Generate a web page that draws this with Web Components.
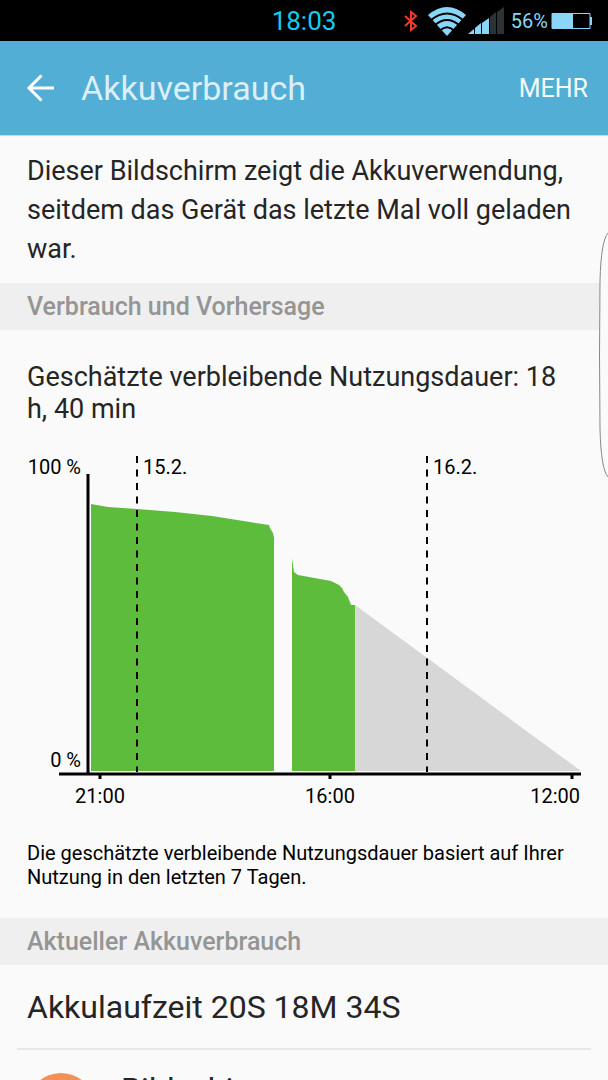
<!doctype html>
<html lang="de">
  <head>
    <meta charset="utf-8">
    <meta name="viewport" content="width=device-width, initial-scale=1">
    <title>Akkuverbrauch</title>
    <style>
      body {
        margin: 0;
        background: #fafafa;
        color: #252525;
        font-family: Roboto, "Liberation Sans", sans-serif;
      }
    </style>
    <script>const html = String.raw;</script>
  </head>
  <body>
    <battery-screen>
      <status-bar slot="top" time="18:03" level="56"></status-bar>
      <action-bar slot="top" action="Mehr">Akkuverbrauch</action-bar>

      <text-block>Dieser Bildschirm zeigt die Akkuverwendung, seitdem das Gerät das letzte Mal voll geladen war.</text-block>
      <section-header>Verbrauch und Vorhersage</section-header>
      <battery-forecast>
        <span slot="estimate">Geschätzte verbleibende Nutzungsdauer: 18 h, 40 min</span>
        <battery-chart></battery-chart>
        <span slot="note">Die geschätzte verbleibende Nutzungsdauer basiert auf Ihrer Nutzung in den letzten 7 Tagen.</span>
      </battery-forecast>
      <section-header>Aktueller Akkuverbrauch</section-header>
      <battery-runtime>Akkulaufzeit 20S 18M 34S</battery-runtime>
      <usage-item>Bildschirm</usage-item>

      <edge-handle slot="overlay"></edge-handle>
    </battery-screen>
    <script>
class BaseElement extends HTMLElement {
  constructor() {
    super();

    this.attachShadow({ mode: 'open' });
    this.shadowRoot.innerHTML = this.render();
  }
}

class BatteryScreen extends BaseElement {
  render() {
    return html`
      <style>
        :host {
          display: flex;
          flex-direction: column;
          position: relative;
          height: 100vh;
          overflow: hidden;
        }
        main {
          flex: 1;
          min-height: 0;
          overflow: hidden;
        }
      </style>

      <slot name="top"></slot>
      <main><slot></slot></main>
      <slot name="overlay"></slot>
    `;
  }
}

class StatusBar extends BaseElement {
  render() {
    return html`
      <style>
        :host {
          display: grid;
          grid-template-columns: 1fr auto 1fr;
          align-items: center;
          height: 41px;
          background: #000;
          color: #8ad6f8;
          font-size: 20px;
        }
        time {
          grid-column: 2;
          color: #12cdf0;
          font-size: 26px;
        }
        .icons {
          display: flex;
          align-items: center;
          justify-content: flex-end;
          padding-right: 15px;
        }
        svg {
          display: block;
          flex: none;
        }
        .wifi {
          margin: 0 2px 0 9px;
        }
        .signal {
          margin-right: 7px;
        }
        .battery {
          margin-left: 3px;
        }
      </style>

      <time>${this.getAttribute('time')}</time>
      <div class="icons">
        <svg width="16" height="22" viewBox="0 0 16 22" fill="none" stroke="#f23c28" stroke-width="2">
          <path d="M2 6l11 10-5 4V2l5 4L2 16"/>
        </svg>
        <svg class="wifi" width="38" height="30" viewBox="0 0 38 30">
          <!-- fan cut into bands by thin black arcs -->
          <path d="M0 9Q19-7 38 9L19 30z" fill="#8ad6f8"/>
          <path d="M3 14Q19 1 35 14M7 19Q19 9 31 19M12 24.500Q19 18 26 24.500" fill="none" stroke="#000" stroke-width="2"/>
        </svg>
        <svg class="signal" width="36" height="28" viewBox="0 0 36 28" fill="#8ad6f8">
          <path d="M0 27l6-5v5zM7 21l6-5v11H7zM14 16l7-5v16h-7z"/>
          <path d="M22 10l6-5v22h-6zM29 5l7-5v27h-7z" fill="#2b3336"/>
        </svg>
        <span>${this.getAttribute('level')}%</span>
        <svg class="battery" width="42" height="18" viewBox="0 0 42 18">
          <path d="M1 1.500h38v15H1z" fill="none" stroke="#8ad6f8"/>
          <path d="M1 1h21v16H1zM39 5h2v8h-2z" fill="#8ad6f8"/>
        </svg>
      </div>
    `;
  }
}

class ActionBar extends BaseElement {
  render() {
    return html`
      <style>
        :host {
          display: flex;
          align-items: center;
          height: 94px;
          padding: 0 20px 0 26px;
          background: #52aed5;
          box-shadow: 0 1px 1px #ccd5d9;
          z-index: 1;
        }
        button {
          border: none;
          padding: 0;
          background: transparent;
          color: #f5fafc;
          font: inherit;
          font-size: 25px;
          text-transform: uppercase;
          cursor: pointer;
        }
        svg {
          display: block;
        }
        h1 {
          flex: 1;
          margin: 0 0 0 27px;
          color: #dceef6;
          font-size: 34px;
          font-weight: 400;
        }
      </style>

      <button aria-label="Zurück">
        <svg width="28" height="28" viewBox="0 0 28 28" fill="none" stroke="#fff" stroke-width="3">
          <path d="M28 14H3M15.500 1.500L3 14l12.500 12.500"/>
        </svg>
      </button>
      <h1><slot></slot></h1>
      <button>${this.getAttribute('action')}</button>
    `;
  }
}

class TextBlock extends BaseElement {
  render() {
    return html`
      <style>
        :host {
          display: block;
          padding: 17px 27px 14px;
          font-size: 27px;
          line-height: 39px;
        }
      </style>

      <slot></slot>
    `;
  }
}

class SectionHeader extends BaseElement {
  render() {
    return html`
      <style>
        :host {
          display: block;
          padding: 0 27px;
          background: #efefef;
          color: #959595;
        }
        h2 {
          margin: 0;
          font-size: 25px;
          font-weight: 500;
          line-height: 47px;
        }
      </style>

      <h2><slot></slot></h2>
    `;
  }
}

class BatteryForecast extends BaseElement {
  render() {
    return html`
      <style>
        :host {
          display: block;
          padding: 31px 0 29px;
        }
        p {
          margin: 0 27px;
        }
        .estimate {
          font-size: 27px;
          line-height: 32px;
        }
        .note {
          color: #000;
          font-size: 20px;
          line-height: 24px;
        }
      </style>

      <p class="estimate"><slot name="estimate"></slot></p>
      <slot></slot>
      <p class="note"><slot name="note"></slot></p>
    `;
  }
}

class BatteryChart extends BaseElement {
  render() {
    return html`
      <style>
        :host {
          display: block;
          padding: 30px 0 26px;
        }
        svg {
          display: block;
          width: 100%;
        }
        text {
          font-size: 20px;
        }
        .end {
          text-anchor: end;
        }
        .middle {
          text-anchor: middle;
        }
      </style>

      <svg viewBox="0 0 608 360" role="img" aria-label="Akkustand">
        <!-- measured level -->
        <g fill="#5dbc3c">
          <path d="M91 49L108 52 137 54 175 57 212 61 269 70 270 73 273 78 274 83V316H91z"/>
          <path d="M292 316V103L294 117 298 120 331 126 339 130 342 133 344 137 348 142 351 150H355V316z"/>
        </g>
        <!-- forecast -->
        <path d="M355 150L581 316H355z" fill="#d7d7d7"/>
        <!-- midnight markers -->
        <path d="M137 1V317M427 1V317" stroke="#000" stroke-width="2" stroke-dasharray="7 6.500"/>
        <path d="M88 19V319M59 319H581" fill="none" stroke="#000" stroke-width="3"/>
        <path d="M100 320v4M330 320v4M572 320v4" stroke="#000" stroke-width="3"/>
        <g fill="#000">
          <text class="end" x="81" y="19">100 %</text>
          <text class="end" x="81" y="312">0 %</text>
          <text x="143" y="19">15.2.</text>
          <text x="433" y="19">16.2.</text>
          <text class="middle" x="100" y="348">21:00</text>
          <text class="middle" x="330" y="348">16:00</text>
          <text class="end" x="580" y="348">12:00</text>
        </g>
      </svg>
    `;
  }
}

class BatteryRuntime extends BaseElement {
  render() {
    return html`
      <style>
        :host {
          display: block;
          margin: 0 17px;
          padding: 1px 10px 0;
          border-bottom: 2px solid #e8e8e8;
          font-size: 32px;
          line-height: 82px;
        }
      </style>

      <slot></slot>
    `;
  }
}

class UsageItem extends BaseElement {
  render() {
    return html`
      <style>
        :host {
          display: flex;
          gap: 26px;
          padding: 23px 27px;
          font-size: 32px;
          line-height: 32px;
        }
        .icon {
          width: 68px;
          height: 68px;
          border-radius: 50%;
          background: #f29156;
        }
      </style>

      <div class="icon"></div>
      <slot></slot>
    `;
  }
}

// Pull-in handle of the edge panel, lies over the right border
class EdgeHandle extends BaseElement {
  render() {
    return html`
      <style>
        :host {
          position: absolute;
          top: 231px;
          right: 0;
        }
        svg {
          display: block;
        }
      </style>

      <svg width="9" height="248" viewBox="0 0 9 248">
        <path d="M9 2Q2 10 1 50Q0 124 1 198Q2 238 9 246" fill="#fafafa" stroke="#888"/>
      </svg>
    `;
  }
}

customElements.define('battery-screen', BatteryScreen);
customElements.define('status-bar', StatusBar);
customElements.define('action-bar', ActionBar);
customElements.define('text-block', TextBlock);
customElements.define('section-header', SectionHeader);
customElements.define('battery-forecast', BatteryForecast);
customElements.define('battery-chart', BatteryChart);
customElements.define('battery-runtime', BatteryRuntime);
customElements.define('usage-item', UsageItem);
customElements.define('edge-handle', EdgeHandle);

    </script>
  </body>
</html>
